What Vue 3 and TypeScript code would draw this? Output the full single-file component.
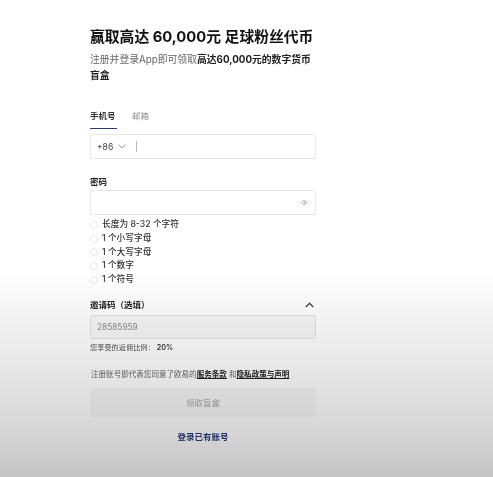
<template>
  <main class="page">
    <section class="form">
      <h1 class="title">赢取高达 60,000元 足球粉丝代币</h1>
      <p class="intro">注册并登录App即可领取<b>高达60,000元的数字货币盲盒</b></p>

      <div class="tabs">
        <span class="tab active">手机号</span>
        <span class="tab">邮箱</span>
      </div>

      <div class="field phone">
        <span class="code">+86</span>
        <svg class="chevron" width="8" height="5" viewBox="0 0 8 5" fill="none">
          <path d="M.7.8 4 4l3.3-3.2" stroke="#8a8a8a" stroke-width=".9" />
        </svg>
        <i class="caret"></i>
      </div>

      <label class="label pass-label">密码</label>
      <div class="field password">
        <svg width="7" height="5" viewBox="0 0 8 6" fill="none">
          <path d="M.4 3C1.4 1.4 2.6.7 4 .7S6.6 1.4 7.6 3C6.6 4.6 5.4 5.3 4 5.3S1.4 4.6.4 3Z" stroke="#888" stroke-width=".8" />
          <circle cx="4" cy="3" r="1" fill="#888" />
        </svg>
      </div>

      <ul class="rules">
        <li v-for="rule in rules" :key="rule"><i class="dot"></i>{{ rule }}</li>
      </ul>

      <div class="invite-head">
        <label class="label">邀请码（选填）</label>
        <svg width="9" height="6" viewBox="0 0 9 6" fill="none">
          <path d="M.8 5 4.5 1.3 8.2 5" stroke="#333" stroke-width="1.1" />
        </svg>
      </div>
      <div class="field invite">28585959</div>
      <p class="ratio">您享受的返佣比例： <b>20%</b></p>

      <p class="terms">注册账号即代表您同意了欧易的<u>服务条款</u> 和<u>隐私政策与声明</u></p>

      <button class="submit" type="button">领取盲盒</button>
      <a class="login">登录已有账号</a>
    </section>
  </main>
</template>

<script setup lang="ts">
const rules: string[] = ['长度为 8-32 个字符', '1 个小写字母', '1 个大写字母', '1 个数字', '1 个符号']
</script>

<style>
html,
body {
  margin: 0;
  background: #fff;
}
</style>

<style scoped>
.page {
  position: relative;
  box-sizing: border-box;
  width: 493px;
  height: 477px;
  padding: 28px 0 0 90px;
  overflow: hidden;
  background: #fff;
  font-family: "Inter", "Noto Sans CJK SC", sans-serif;
  color: #1a1a1a;
}

/* dark fade lying over the lower part of the form */
.page::after {
  content: "";
  position: absolute;
  inset: 0;
  pointer-events: none;
  background: linear-gradient(rgba(0, 0, 0, 0) 272px, rgba(0, 0, 0, 0.05) 320px, rgba(0, 0, 0, 0.1) 375px, rgba(0, 0, 0, 0.16) 430px, rgba(0, 0, 0, 0.23) 477px);
}

.form {
  display: flex;
  flex-direction: column;
  width: 226px;
  filter: blur(0.35px);
}

.title {
  margin: 0;
  font-size: 14.8px;
  line-height: 18px;
  font-weight: 700;
  white-space: nowrap;
  color: #111;
}

.intro {
  margin: 6px 0 0;
  font-size: 9.8px;
  line-height: 16px;
  color: #666;
}

.intro b {
  color: #222;
  font-weight: 700;
}

.tabs {
  display: flex;
  gap: 15px;
  margin-top: 25px;
  height: 21px;
  font-size: 8.5px;
  line-height: 14px;
}

.tab {
  color: #8c8c8c;
}

.tab.active {
  width: 27px;
  height: 19px;
  font-weight: 600;
  color: #333;
  border-bottom: 1px solid #2c3a6e;
}

.field {
  box-sizing: border-box;
  display: flex;
  align-items: center;
  width: 226px;
  height: 25px;
  border: 1px solid #e8e8e8;
  border-radius: 2px;
  background: #fff;
}

.phone {
  margin-top: 4px;
  padding-left: 6px;
}

.code {
  font-size: 8.5px;
  color: #444;
}

.chevron {
  margin-left: 5px;
}

.caret {
  width: 1px;
  height: 11px;
  margin-left: 10px;
  background: #bbb;
}

.label {
  font-size: 8.5px;
  line-height: 12px;
  font-weight: 700;
  color: #222;
}

.pass-label {
  margin-top: 17px;
}

.password {
  justify-content: flex-end;
  margin-top: 2px;
  padding-right: 7px;
}

.rules {
  list-style: none;
  margin: 3px 0 0;
  padding: 0;
  font-size: 8.7px;
  line-height: 13.8px;
  font-weight: 500;
  color: #333;
}

.rules li {
  display: flex;
  align-items: center;
  gap: 4px;
}

.dot {
  box-sizing: border-box;
  width: 8px;
  height: 8px;
  border: 1px solid #e6e6e6;
  border-radius: 50%;
}

.invite-head {
  display: flex;
  justify-content: space-between;
  align-items: center;
  margin-top: 12px;
  padding-right: 2px;
}

.invite {
  margin-top: 4px;
  padding-left: 6px;
  height: 24px;
  border-color: #e2e2e2;
  background: #f7f7f7;
  font-size: 8.3px;
  color: #888;
}

.ratio {
  margin: 3px 0 0;
  font-size: 7.2px;
  line-height: 11px;
  color: #555;
}

.ratio b {
  color: #333;
  font-weight: 600;
}

.terms {
  margin: 16px 0 0 1px;
  font-size: 7.55px;
  line-height: 11px;
  white-space: nowrap;
  color: #666;
}

.terms u {
  color: #222;
  font-weight: 700;
}

.submit {
  width: 226px;
  height: 29px;
  margin-top: 8px;
  border: 0;
  border-radius: 2px;
  background: #f7f7f7;
  font: inherit;
  font-size: 8.5px;
  color: #a8a8a8;
}

.login {
  margin-top: 14px;
  text-align: center;
  font-size: 8.5px;
  line-height: 12px;
  font-weight: 600;
  color: #2c3a7a;
}
</style>
